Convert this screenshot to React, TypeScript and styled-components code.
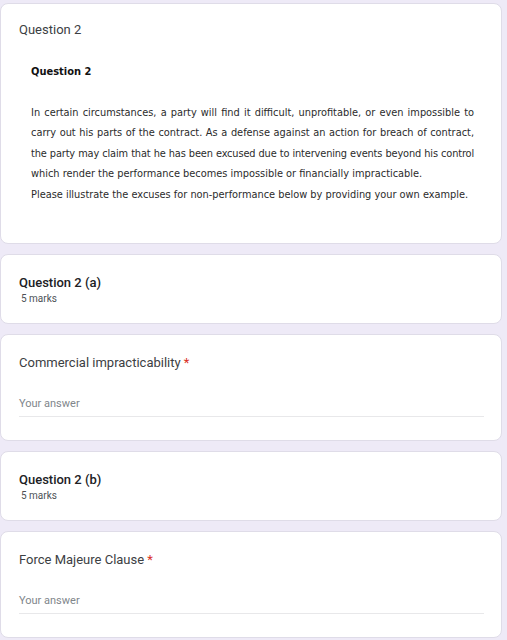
import React from "react";
import styled, { createGlobalStyle } from "styled-components";

const GlobalStyle = createGlobalStyle`
  html, body {
    margin: 0;
    padding: 0;
    background: #eeeaf7;
  }
  body {
    font-family: Roboto, "Liberation Sans", sans-serif;
    color: #202124;
  }
`;

const Page = styled.main`
  display: flex;
  flex-direction: column;
  gap: 10px;
  padding: 3px 5px 3px 0;
`;

type Variant = "intro" | "section" | "question";

const paddings: Record<Variant, string> = {
  intro: "18px 18px 38px 18px",
  section: "20px 18px 18px 18px",
  question: "20px 18px 23px 18px",
};

const Card = styled.section<{ $variant: Variant }>`
  background: #fff;
  border: 1px solid #dfdce8;
  border-radius: 8px;
  padding: ${(p) => paddings[p.$variant]};
`;

const CardTitle = styled.div<{ $light?: boolean }>`
  font-size: 13px;
  line-height: 16px;
  font-weight: ${(p) => (p.$light ? 400 : 500)};
  color: ${(p) => (p.$light ? "#3c4043" : "#202124")};
`;

const Required = styled.span`
  color: #d93025;
  margin-left: 3px;
`;

const Marks = styled.div`
  font-size: 10px;
  line-height: 13px;
  color: #4d5156;
  margin-top: 1px;
  padding-left: 2px;
`;

const Figure = styled.div`
  margin: 26px 0 0 12px;
  width: 443px;
  font-family: "DejaVu Sans Condensed", "DejaVu Sans", sans-serif;
  color: #2b2b2b;
`;

const FigureHeading = styled.div`
  font-size: 11px;
  line-height: 16px;
  font-weight: 700;
  color: #111;
`;

const FigureText = styled.div`
  margin-top: 23px;
  font-size: 10.9px;
  line-height: 20.4px;
`;

const Line = styled.div<{ $justify?: boolean; $tight?: boolean }>`
  white-space: nowrap;
  text-align: ${(p) => (p.$justify ? "justify" : "left")};
  text-align-last: ${(p) => (p.$justify ? "justify" : "left")};
  letter-spacing: ${(p) => (p.$tight ? "-0.14px" : "0")};
`;

const AnswerField = styled.div`
  margin-top: 26px;
  width: 465px;
  font-size: 11px;
  line-height: 14px;
  color: #80868b;
  padding-bottom: 5px;
  border-bottom: 1px solid #e8e8ea;
`;

const paragraph = [
  { text: "In certain circumstances, a party will find it difficult, unprofitable, or even impossible to", justify: true },
  { text: "carry out his parts of the contract. As a defense against an action for breach of contract,", justify: true },
  { text: "the party may claim that he has been excused due to intervening events beyond his control", justify: true, tight: true },
  { text: "which render the performance becomes impossible or financially impracticable." },
  { text: "Please illustrate the excuses for non-performance below by providing your own example." },
];

const SectionCard: React.FC<{ title: string; marks: string }> = ({ title, marks }) => (
  <Card $variant="section">
    <CardTitle>{title}</CardTitle>
    <Marks>{marks}</Marks>
  </Card>
);

const QuestionCard: React.FC<{ label: string }> = ({ label }) => (
  <Card $variant="question">
    <CardTitle $light>
      {label}
      <Required>*</Required>
    </CardTitle>
    <AnswerField>Your answer</AnswerField>
  </Card>
);

export default function App() {
  return (
    <>
      <GlobalStyle />
      <Page>
        <Card $variant="intro">
          <CardTitle $light>Question 2</CardTitle>
          <Figure>
            <FigureHeading>Question 2</FigureHeading>
            <FigureText>
              {paragraph.map((l) => (
                <Line key={l.text} $justify={l.justify} $tight={l.tight}>
                  {l.text}
                </Line>
              ))}
            </FigureText>
          </Figure>
        </Card>
        <SectionCard title="Question 2 (a)" marks="5 marks" />
        <QuestionCard label="Commercial impracticability" />
        <SectionCard title="Question 2 (b)" marks="5 marks" />
        <QuestionCard label="Force Majeure Clause" />
      </Page>
    </>
  );
}
